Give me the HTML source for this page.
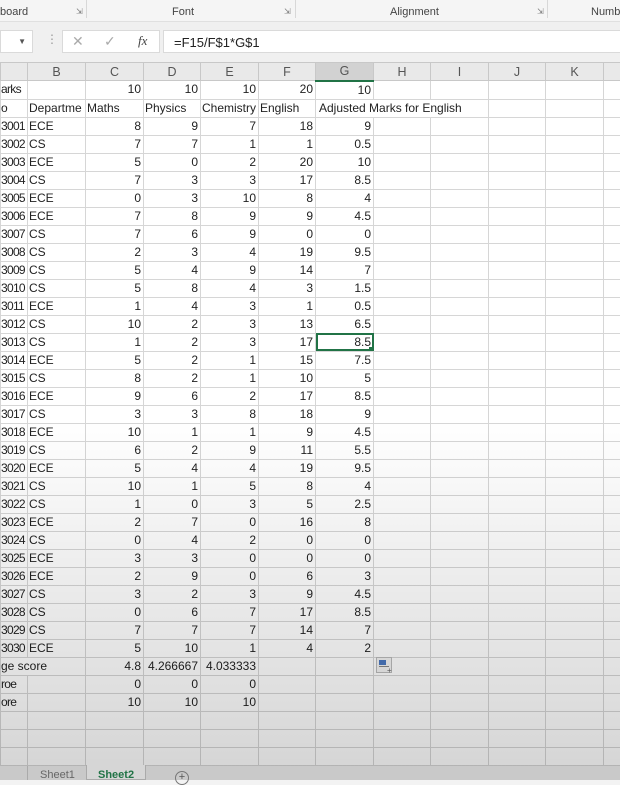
<!DOCTYPE html>
<html><head><meta charset="utf-8"><style>
*{box-sizing:border-box;margin:0;padding:0}
body{width:620px;height:780px;overflow:hidden;background:#f3f3f3;font-family:"Liberation Sans",sans-serif;position:relative;color:#222}
.rib{position:absolute;left:0;top:0;width:620px;height:22px;background:#f5f5f5;border-bottom:1px solid #e0e0e0;font-size:11px;color:#444}
.rib span{position:absolute;top:6px}
.sep{position:absolute;top:0;width:1px;height:18px;background:#d8d8d8}
.ln{position:absolute;top:7px;font-size:8px;color:#777}
.fb{position:absolute;top:22px;left:0;width:620px;height:40px;background:#f0f0f0}
.box{position:absolute;background:#fff;border:1px solid #dadada;top:8px;height:23px}
table{position:absolute;left:0;top:62px;width:620px;border-collapse:collapse;table-layout:fixed;font-size:12px}
td{height:18px;border:1px solid #d6d6d6;background:#fff;white-space:nowrap;overflow:hidden;padding:0 1px;line-height:17px}
td:first-child{padding:0;letter-spacing:-0.7px}
th{height:18px;background:#e9e9e9;border:1px solid #c8c8c8;font-weight:normal;font-size:12.5px;color:#555;overflow:hidden}
td.n{text-align:right;padding-right:2px}
.ov{position:absolute;left:0;top:420px;width:620px;height:360px;background:linear-gradient(rgba(0,0,0,0),rgba(0,0,0,0.17));pointer-events:none}
.tabs{position:absolute;left:0;top:766px;width:620px;height:14px;background:#c9c9c9;font-size:11px}
</style></head><body>
<div class="rib">
<span style="left:0">board</span><div class="ln" style="left:76px">⇲</div><div class="sep" style="left:86px"></div>
<span style="left:172px">Font</span><div class="ln" style="left:284px">⇲</div><div class="sep" style="left:295px"></div>
<span style="left:390px">Alignment</span><div class="ln" style="left:537px">⇲</div><div class="sep" style="left:547px"></div>
<span style="left:591px">Numb</span>
</div>
<div class="fb">
<div class="box" style="left:0;width:33px"><span style="position:absolute;right:6px;top:6px;font-size:8px;color:#555">▼</span></div>
<div style="position:absolute;left:46px;top:10px;color:#999;font-size:12px">⋮</div>
<div class="box" style="left:62px;width:98px;color:#aaa;font-size:14px"><span style="position:absolute;left:9px;top:2px">✕</span><span style="position:absolute;left:41px;top:2px">✓</span><span style="position:absolute;left:75px;top:2px;color:#444;font-style:italic;font-family:'Liberation Serif',serif;font-size:13px">fx</span></div>
<div class="box" style="left:163px;width:470px;font-size:13px;padding:4px 0 0 10px">=F15/F$1*G$1</div>
</div>
<table>
<colgroup><col style="width:27px"><col style="width:58px"><col style="width:58px"><col style="width:57px"><col style="width:58px"><col style="width:57px"><col style="width:58px"><col style="width:57px"><col style="width:58px"><col style="width:57px"><col style="width:58px"><col style="width:17px"></colgroup>
<tr><th></th><th>B</th><th>C</th><th>D</th><th>E</th><th>F</th><th style="background:#d2d2d2;border-bottom:2px solid #217346">G</th><th>H</th><th>I</th><th>J</th><th>K</th><th></th></tr>
<tr><td>arks</td><td></td><td class="n">10</td><td class="n">10</td><td class="n">10</td><td class="n">20</td><td class="n">10</td><td></td><td></td><td></td><td></td><td></td></tr>
<tr><td>o</td><td>Departme</td><td>Maths</td><td>Physics</td><td>Chemistry</td><td>English</td><td colspan="3" style="padding-left:3px">Adjusted Marks for English</td><td></td><td></td><td></td></tr>
<tr><td>3001</td><td>ECE</td><td class="n">8</td><td class="n">9</td><td class="n">7</td><td class="n">18</td><td class="n">9</td><td></td><td></td><td></td><td></td><td></td></tr>
<tr><td>3002</td><td>CS</td><td class="n">7</td><td class="n">7</td><td class="n">1</td><td class="n">1</td><td class="n">0.5</td><td></td><td></td><td></td><td></td><td></td></tr>
<tr><td>3003</td><td>ECE</td><td class="n">5</td><td class="n">0</td><td class="n">2</td><td class="n">20</td><td class="n">10</td><td></td><td></td><td></td><td></td><td></td></tr>
<tr><td>3004</td><td>CS</td><td class="n">7</td><td class="n">3</td><td class="n">3</td><td class="n">17</td><td class="n">8.5</td><td></td><td></td><td></td><td></td><td></td></tr>
<tr><td>3005</td><td>ECE</td><td class="n">0</td><td class="n">3</td><td class="n">10</td><td class="n">8</td><td class="n">4</td><td></td><td></td><td></td><td></td><td></td></tr>
<tr><td>3006</td><td>ECE</td><td class="n">7</td><td class="n">8</td><td class="n">9</td><td class="n">9</td><td class="n">4.5</td><td></td><td></td><td></td><td></td><td></td></tr>
<tr><td>3007</td><td>CS</td><td class="n">7</td><td class="n">6</td><td class="n">9</td><td class="n">0</td><td class="n">0</td><td></td><td></td><td></td><td></td><td></td></tr>
<tr><td>3008</td><td>CS</td><td class="n">2</td><td class="n">3</td><td class="n">4</td><td class="n">19</td><td class="n">9.5</td><td></td><td></td><td></td><td></td><td></td></tr>
<tr><td>3009</td><td>CS</td><td class="n">5</td><td class="n">4</td><td class="n">9</td><td class="n">14</td><td class="n">7</td><td></td><td></td><td></td><td></td><td></td></tr>
<tr><td>3010</td><td>CS</td><td class="n">5</td><td class="n">8</td><td class="n">4</td><td class="n">3</td><td class="n">1.5</td><td></td><td></td><td></td><td></td><td></td></tr>
<tr><td>3011</td><td>ECE</td><td class="n">1</td><td class="n">4</td><td class="n">3</td><td class="n">1</td><td class="n">0.5</td><td></td><td></td><td></td><td></td><td></td></tr>
<tr><td>3012</td><td>CS</td><td class="n">10</td><td class="n">2</td><td class="n">3</td><td class="n">13</td><td class="n">6.5</td><td></td><td></td><td></td><td></td><td></td></tr>
<tr><td>3013</td><td>CS</td><td class="n">1</td><td class="n">2</td><td class="n">3</td><td class="n">17</td><td class="n" style="outline:2px solid #217346;outline-offset:-2px;position:relative">8.5<span style="position:absolute;right:-1px;bottom:-1px;width:5px;height:5px;background:#217346"></span></td><td></td><td></td><td></td><td></td><td></td></tr>
<tr><td>3014</td><td>ECE</td><td class="n">5</td><td class="n">2</td><td class="n">1</td><td class="n">15</td><td class="n">7.5</td><td></td><td></td><td></td><td></td><td></td></tr>
<tr><td>3015</td><td>CS</td><td class="n">8</td><td class="n">2</td><td class="n">1</td><td class="n">10</td><td class="n">5</td><td></td><td></td><td></td><td></td><td></td></tr>
<tr><td>3016</td><td>ECE</td><td class="n">9</td><td class="n">6</td><td class="n">2</td><td class="n">17</td><td class="n">8.5</td><td></td><td></td><td></td><td></td><td></td></tr>
<tr><td>3017</td><td>CS</td><td class="n">3</td><td class="n">3</td><td class="n">8</td><td class="n">18</td><td class="n">9</td><td></td><td></td><td></td><td></td><td></td></tr>
<tr><td>3018</td><td>ECE</td><td class="n">10</td><td class="n">1</td><td class="n">1</td><td class="n">9</td><td class="n">4.5</td><td></td><td></td><td></td><td></td><td></td></tr>
<tr><td>3019</td><td>CS</td><td class="n">6</td><td class="n">2</td><td class="n">9</td><td class="n">11</td><td class="n">5.5</td><td></td><td></td><td></td><td></td><td></td></tr>
<tr><td>3020</td><td>ECE</td><td class="n">5</td><td class="n">4</td><td class="n">4</td><td class="n">19</td><td class="n">9.5</td><td></td><td></td><td></td><td></td><td></td></tr>
<tr><td>3021</td><td>CS</td><td class="n">10</td><td class="n">1</td><td class="n">5</td><td class="n">8</td><td class="n">4</td><td></td><td></td><td></td><td></td><td></td></tr>
<tr><td>3022</td><td>CS</td><td class="n">1</td><td class="n">0</td><td class="n">3</td><td class="n">5</td><td class="n">2.5</td><td></td><td></td><td></td><td></td><td></td></tr>
<tr><td>3023</td><td>ECE</td><td class="n">2</td><td class="n">7</td><td class="n">0</td><td class="n">16</td><td class="n">8</td><td></td><td></td><td></td><td></td><td></td></tr>
<tr><td>3024</td><td>CS</td><td class="n">0</td><td class="n">4</td><td class="n">2</td><td class="n">0</td><td class="n">0</td><td></td><td></td><td></td><td></td><td></td></tr>
<tr><td>3025</td><td>ECE</td><td class="n">3</td><td class="n">3</td><td class="n">0</td><td class="n">0</td><td class="n">0</td><td></td><td></td><td></td><td></td><td></td></tr>
<tr><td>3026</td><td>ECE</td><td class="n">2</td><td class="n">9</td><td class="n">0</td><td class="n">6</td><td class="n">3</td><td></td><td></td><td></td><td></td><td></td></tr>
<tr><td>3027</td><td>CS</td><td class="n">3</td><td class="n">2</td><td class="n">3</td><td class="n">9</td><td class="n">4.5</td><td></td><td></td><td></td><td></td><td></td></tr>
<tr><td>3028</td><td>CS</td><td class="n">0</td><td class="n">6</td><td class="n">7</td><td class="n">17</td><td class="n">8.5</td><td></td><td></td><td></td><td></td><td></td></tr>
<tr><td>3029</td><td>CS</td><td class="n">7</td><td class="n">7</td><td class="n">7</td><td class="n">14</td><td class="n">7</td><td></td><td></td><td></td><td></td><td></td></tr>
<tr><td>3030</td><td>ECE</td><td class="n">5</td><td class="n">10</td><td class="n">1</td><td class="n">4</td><td class="n">2</td><td></td><td></td><td></td><td></td><td></td></tr>
<tr><td colspan="2" style="letter-spacing:0">ge score</td><td class="n">4.8</td><td class="n">4.266667</td><td class="n">4.033333</td><td></td><td></td><td></td><td></td><td></td><td></td><td></td></tr>
<tr><td>roe</td><td></td><td class="n">0</td><td class="n">0</td><td class="n">0</td><td></td><td></td><td></td><td></td><td></td><td></td><td></td></tr>
<tr><td>ore</td><td></td><td class="n">10</td><td class="n">10</td><td class="n">10</td><td></td><td></td><td></td><td></td><td></td><td></td><td></td></tr>
<tr><td></td><td></td><td></td><td></td><td></td><td></td><td></td><td></td><td></td><td></td><td></td><td></td></tr>
<tr><td></td><td></td><td></td><td></td><td></td><td></td><td></td><td></td><td></td><td></td><td></td><td></td></tr>
<tr><td></td><td></td><td></td><td></td><td></td><td></td><td></td><td></td><td></td><td></td><td></td><td></td></tr>
</table>
<div style="position:absolute;left:376px;top:657px;width:16px;height:16px;border:1px solid #bbb;background:#f2f2f2">
<div style="position:absolute;left:2px;top:2px;width:7px;height:5px;background:#4a78c0"></div>
<div style="position:absolute;left:2px;top:8px;width:10px;height:1px;background:#888"></div>
<div style="position:absolute;left:10px;top:10px;font-size:8px;line-height:6px;color:#666">+</div>
</div>
<div class="ov"></div>
<div class="tabs">
<div style="position:absolute;left:27px;top:0;width:1px;height:14px;background:#aaa"></div>
<div style="position:absolute;left:40px;top:3px;color:#666">Sheet1</div>
<div style="position:absolute;left:86px;top:-1px;width:60px;height:15px;background:#d6d6d6;border:1px solid #aaa;border-top:none;color:#217346;font-weight:bold;padding:4px 0 0 11px">Sheet2</div>
<div style="position:absolute;left:175px;top:5px;width:14px;height:14px;border:1px solid #777;border-radius:50%;color:#555;font-size:11px;text-align:center;line-height:11px">+</div>
</div>
</body></html>
